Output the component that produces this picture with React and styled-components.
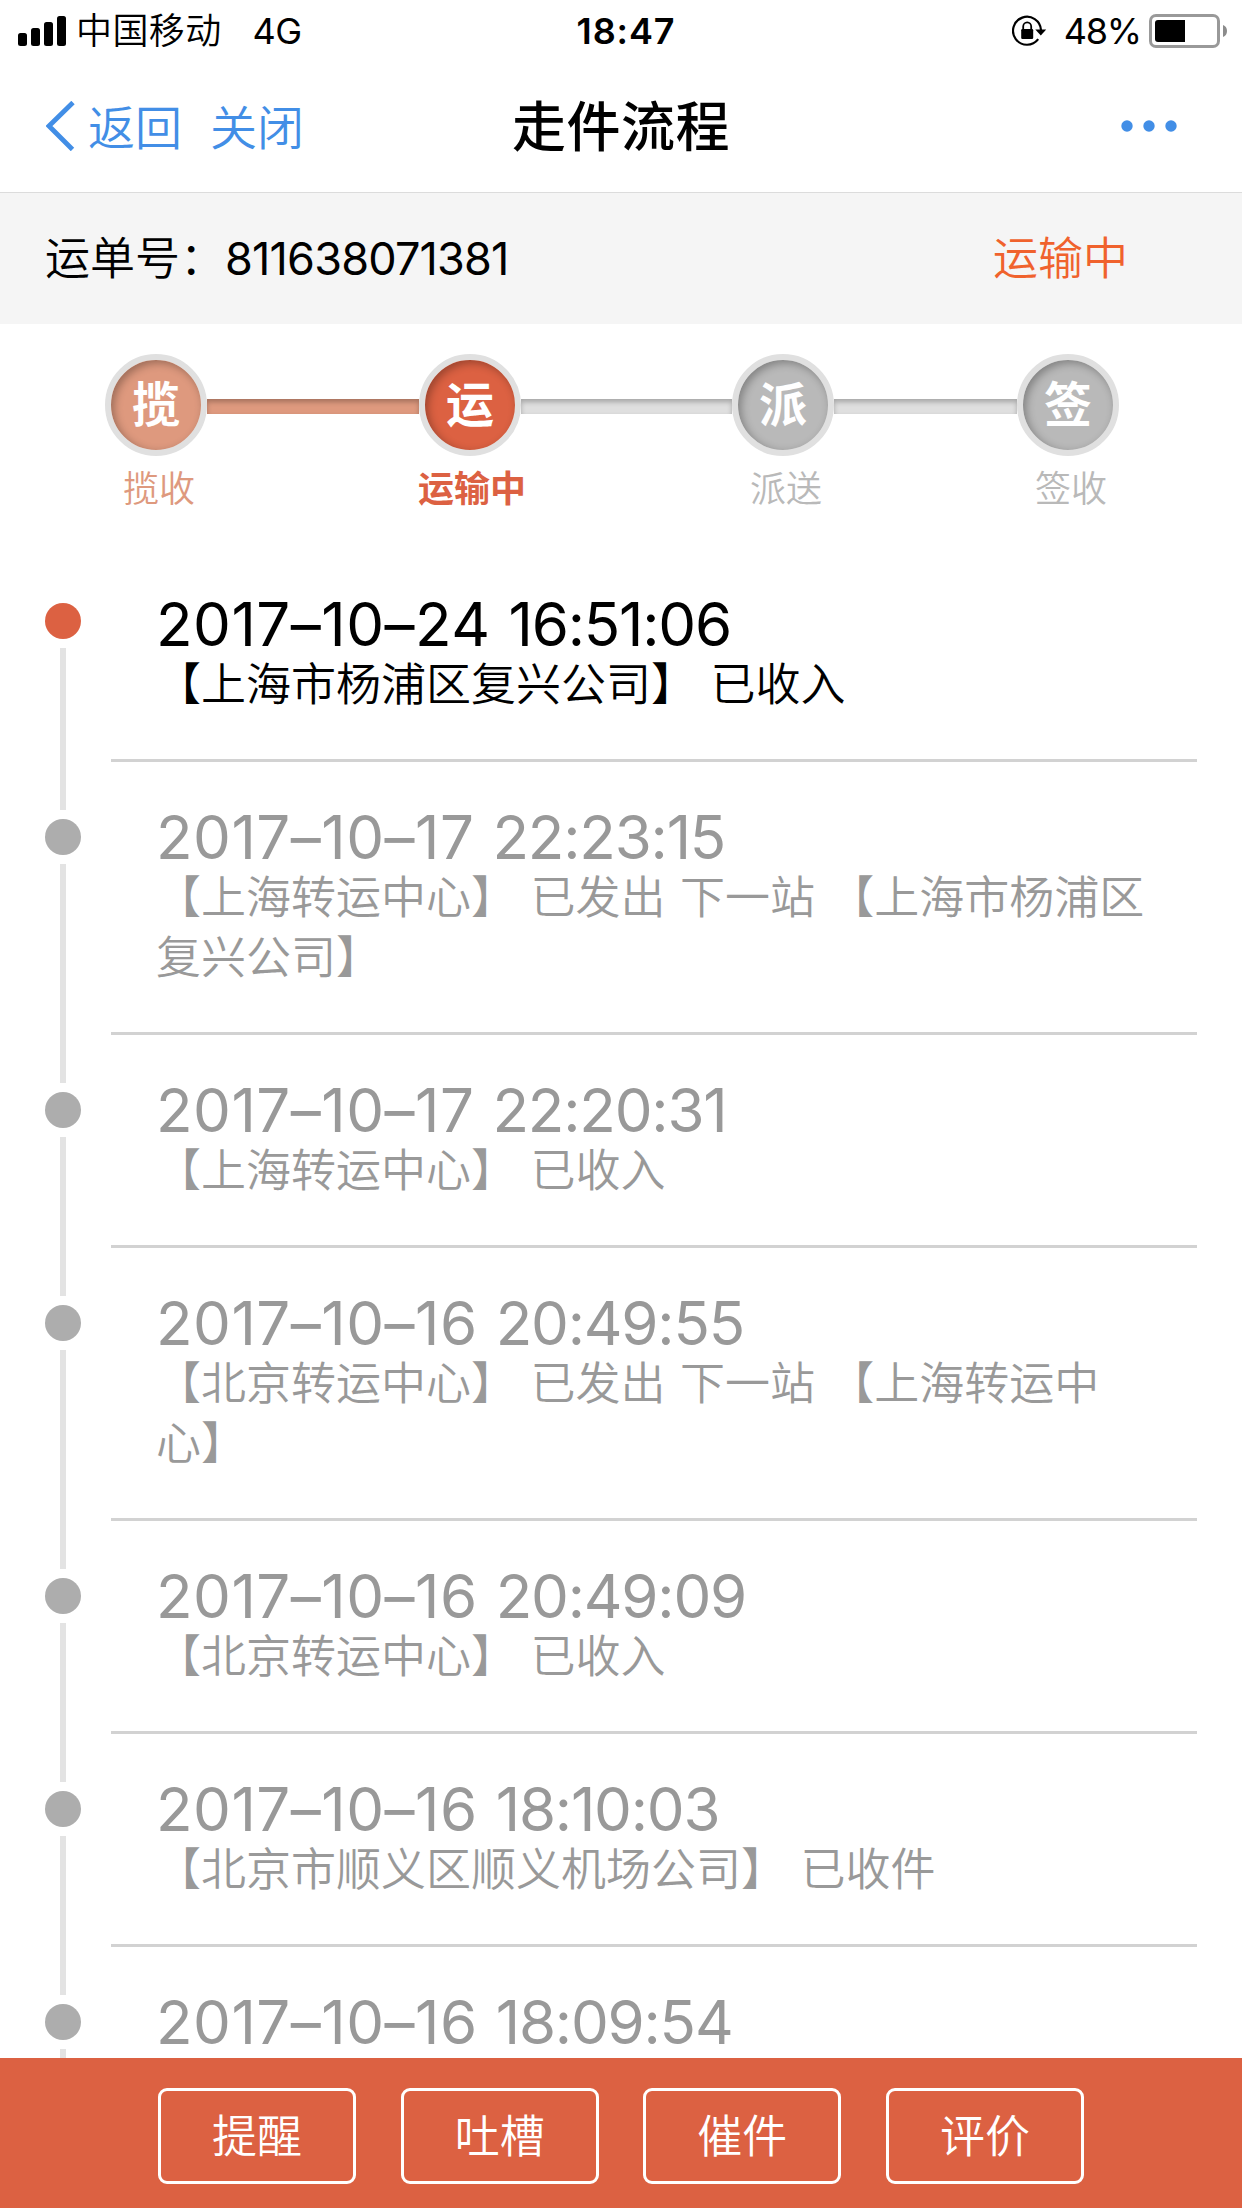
import React from 'react';
import styled, { createGlobalStyle } from 'styled-components';

const colors = {
  primary: '#dc6142',
  done: '#de997e',
  idle: '#b9b9b9',
  ring: '#e0e0e0',
  link: '#428ee6',
  muted: '#999',
};

const GlobalStyle = createGlobalStyle`
  * {
    box-sizing: border-box;
  }

  body {
    margin: 0;
    background: #fff;
    color: #000;
    font-family: Inter, 'Noto Sans CJK SC', sans-serif;
    font-weight: 350;
  }
`;

const Screen = styled.div`
  display: flex;
  flex-direction: column;
  width: 1242px;
  height: 2208px;
  overflow: hidden;
`;

const StatusBar = styled.div`
  display: grid;
  grid-template-columns: 1fr auto 1fr;
  align-items: center;
  flex: none;
  height: 60px;
  padding: 0 15px 0 18px;
  font-size: 36px;
  line-height: 60px;
`;

const StatusGroup = styled.div`
  display: flex;
  align-items: center;
  justify-content: ${props => (props.$end ? 'flex-end' : 'flex-start')};
`;

const StatusText = styled.span`
  padding-top: 1px;
  font-weight: 400;
`;

const Carrier = styled(StatusText)`
  margin: 0 31px 0 10px;
  font-weight: 350;
  letter-spacing: 0.4px;
`;

const Network = styled(StatusText)`
  letter-spacing: -0.5px;
`;

const Clock = styled(StatusText)`
  padding-left: 7px;
  font-weight: 600;
  letter-spacing: 0.9px;
`;

const BatteryLevel = styled(StatusText)`
  margin: 0 8px 0 16px;
  letter-spacing: -1.2px;
`;

const NavBar = styled.div`
  display: grid;
  grid-template-columns: 1fr auto 1fr;
  align-items: center;
  flex: none;
  height: 133px;
  padding: 0 46px;
  border-bottom: 1px solid #dcdcdc;
`;

const NavLinks = styled.div`
  display: flex;
  align-items: center;
  gap: 28px;
  color: ${colors.link};
  font-size: 47px;
`;

const BackLink = styled.div`
  display: flex;
  align-items: center;
  gap: 12px;
`;

const NavLink = styled.span`
  padding-bottom: 3px;
`;

const Title = styled.h1`
  margin: 0;
  padding-bottom: 5px;
  font-size: 54px;
  font-weight: 500;
  letter-spacing: 0.5px;
`;

const NavMore = styled.div`
  display: flex;
  justify-content: flex-end;
  padding-right: 19px;
`;

const Waybill = styled.div`
  display: flex;
  justify-content: space-between;
  align-items: center;
  flex: none;
  height: 131px;
  padding: 0 114px 7px 45px;
  background: #f5f5f5;
  font-size: 45px;
`;

const WaybillNumber = styled.span`
  font-weight: 400;
  letter-spacing: -0.8px;
`;

const WaybillStatus = styled.span`
  color: #f0622d;
`;

const Steps = styled.div`
  display: flex;
  align-items: flex-start;
  flex: none;
  height: 225px;
  padding: 30px 0 0 105px;
`;

const Step = styled.div`
  display: flex;
  flex-direction: column;
  align-items: center;
  flex: none;
  width: 102px;
`;

const StepCircle = styled.div`
  display: flex;
  justify-content: center;
  align-items: center;
  width: 102px;
  height: 102px;
  padding-bottom: 9px;
  border: 6px solid ${colors.ring};
  border-radius: 50%;
  background: ${props => props.$color};
  box-shadow: inset 3px 3px 9px rgba(0, 0, 0, 0.3);
  color: #fff;
  font-size: 48px;
  font-weight: 600;
`;

const StepLabel = styled.div`
  margin-top: 6px;
  padding-left: ${props => (props.$active ? 4 : 6)}px;
  color: ${props => props.$color};
  font-size: 36px;
  font-weight: ${props => (props.$active ? 700 : 350)};
  line-height: 54px;
  white-space: nowrap;
`;

const Connector = styled.div`
  flex: none;
  width: ${props => props.$width}px;
  height: 15px;
  margin-top: 45px;
  background: ${props => (props.$done ? colors.done : '#dfdfdf')};
  box-shadow: inset 0 3px 5px rgba(0, 0, 0, 0.26);
`;

const Timeline = styled.div`
  flex: 1;
  min-height: 0;
  overflow: hidden;
`;

const Event = styled.div`
  display: flex;
  min-height: 210px;
  padding: 0 45px;
  color: ${props => (props.$current ? '#000' : colors.muted)};
`;

const Rail = styled.div`
  display: flex;
  flex-direction: column;
  align-items: center;
  flex: none;
  gap: 9px;
  width: 36px;
  margin-right: 30px;
`;

const RailTop = styled.div`
  width: 6px;
  height: ${props => (props.$first ? 45 : 51)}px;
  background: ${props => (props.$first ? 'transparent' : '#e3e3e3')};
`;

const RailDot = styled.div`
  width: 36px;
  height: 36px;
  border-radius: 50%;
  background: ${props => (props.$current ? colors.primary : '#adadad')};
`;

const RailLine = styled.div`
  flex: 1;
  width: 6px;
  background: #e3e3e3;
`;

const EventBody = styled.div`
  flex: 1;
  padding: 45px 40px 44px 45px;
  border-top: ${props => (props.$first ? 'none' : '3px solid #d2d2d2')};
  line-height: 60px;
`;

const EventTime = styled.div`
  display: flex;
  gap: 18px;
  font-size: 60px;
  font-weight: 400;
`;

const DatePart = styled.span`
  letter-spacing: 0.5px;
`;

const TimePart = styled.span`
  letter-spacing: -1.2px;
`;

const EventText = styled.div`
  padding-top: 1px;
  font-size: 45px;
  word-spacing: 1.8px;
`;

const ActionBar = styled.div`
  display: flex;
  gap: 44.7px;
  flex: none;
  height: 150px;
  padding: 30px 0 0 158px;
  background: ${colors.primary};
`;

const ActionButton = styled.button`
  flex: none;
  width: 198px;
  height: 96px;
  padding: 0 0 6px;
  border: 3px solid #fff;
  border-radius: 9px;
  background: none;
  color: #fff;
  font: inherit;
  font-size: 45px;
`;

const steps = [
  { mark: '揽', label: '揽收', color: colors.done, line: 212, done: true },
  { mark: '运', label: '运输中', color: colors.primary, line: 211, active: true },
  { mark: '派', label: '派送', color: colors.idle, line: 183 },
  { mark: '签', label: '签收', color: colors.idle },
];

const events = [
  { date: '2017–10–24', time: '16:51:06', text: '【上海市杨浦区复兴公司】 已收入' },
  { date: '2017–10–17', time: '22:23:15', text: '【上海转运中心】 已发出 下一站 【上海市杨浦区复兴公司】' },
  { date: '2017–10–17', time: '22:20:31', text: '【上海转运中心】 已收入' },
  { date: '2017–10–16', time: '20:49:55', text: '【北京转运中心】 已发出 下一站 【上海转运中心】' },
  { date: '2017–10–16', time: '20:49:09', text: '【北京转运中心】 已收入' },
  { date: '2017–10–16', time: '18:10:03', text: '【北京市顺义区顺义机场公司】 已收件' },
  { date: '2017–10–16', time: '18:09:54' },
];

const actions = ['提醒', '吐槽', '催件', '评价'];

const SignalIcon = () => (
  <svg width="48" height="30" viewBox="0 0 48 30">
    <rect x="0" y="17" width="9" height="13" rx="2.5" />
    <rect x="13" y="12" width="9" height="18" rx="2.5" />
    <rect x="26" y="6" width="9" height="24" rx="2.5" />
    <rect x="39" y="0" width="9" height="30" rx="2.5" />
  </svg>
);

const RotationLockIcon = () => (
  <svg width="36" height="32" viewBox="0 0 36 32">
    <path d="M26.2 24.2A14 14 0 1 1 29 15" fill="none" stroke="#000" strokeWidth="2.2" />
    <path d="M23.3 14.6H34.2L28.8 20.6Z" />
    <rect x="9.2" y="14" width="12" height="10" rx="1.2" />
    <path d="M11.2 15V11.5a4 4.2 0 0 1 8 0V15" fill="none" stroke="#000" strokeWidth="1.8" />
  </svg>
);

const BatteryIcon = () => (
  <svg width="78" height="34" viewBox="0 0 78 34">
    <rect x="1.5" y="1.5" width="68" height="31" rx="5.5" fill="none" stroke="#999" strokeWidth="3" />
    <path d="M9 6H36V28H9a3 3 0 0 1-3-3V9a3 3 0 0 1 3-3Z" />
    <path d="M74 11a6.5 6.5 0 0 1 0 12Z" fill="#8c8c8c" />
  </svg>
);

const BackIcon = () => (
  <svg width="30" height="50" viewBox="0 0 30 50">
    <path d="M27 1.5L3 25L26.5 48.5" fill="none" stroke={colors.link} strokeWidth="4.8" />
  </svg>
);

const MoreIcon = () => (
  <svg width="56" height="12" viewBox="0 0 56 12">
    <circle cx="6" cy="6" r="5.7" fill={colors.link} />
    <circle cx="28" cy="6" r="5.7" fill={colors.link} />
    <circle cx="50" cy="6" r="5.7" fill={colors.link} />
  </svg>
);

const App = () => (
  <>
    <GlobalStyle />
    <Screen>
      <StatusBar>
        <StatusGroup>
          <SignalIcon />
          <Carrier>中国移动</Carrier>
          <Network>4G</Network>
        </StatusGroup>
        <Clock>18:47</Clock>
        <StatusGroup $end>
          <RotationLockIcon />
          <BatteryLevel>48%</BatteryLevel>
          <BatteryIcon />
        </StatusGroup>
      </StatusBar>

      <NavBar>
        <NavLinks>
          <BackLink>
            <BackIcon />
            <NavLink>返回</NavLink>
          </BackLink>
          <NavLink>关闭</NavLink>
        </NavLinks>
        <Title>走件流程</Title>
        <NavMore>
          <MoreIcon />
        </NavMore>
      </NavBar>

      <Waybill>
        <span>运单号：<WaybillNumber>811638071381</WaybillNumber></span>
        <WaybillStatus>运输中</WaybillStatus>
      </Waybill>

      <Steps>
        {steps.map(step => (
          <React.Fragment key={step.mark}>
            <Step>
              <StepCircle $color={step.color}>{step.mark}</StepCircle>
              <StepLabel $color={step.color} $active={step.active}>{step.label}</StepLabel>
            </Step>
            {step.line && <Connector $width={step.line} $done={step.done} />}
          </React.Fragment>
        ))}
      </Steps>

      <Timeline>
        {events.map((event, index) => (
          <Event key={event.time} $current={index === 0}>
            <Rail>
              <RailTop $first={index === 0} />
              <RailDot $current={index === 0} />
              <RailLine />
            </Rail>
            <EventBody $first={index === 0}>
              <EventTime>
                <DatePart>{event.date}</DatePart>
                <TimePart>{event.time}</TimePart>
              </EventTime>
              {event.text && <EventText>{event.text}</EventText>}
            </EventBody>
          </Event>
        ))}
      </Timeline>

      <ActionBar>
        {actions.map(action => (
          <ActionButton key={action}>{action}</ActionButton>
        ))}
      </ActionBar>
    </Screen>
  </>
);

export default App;
